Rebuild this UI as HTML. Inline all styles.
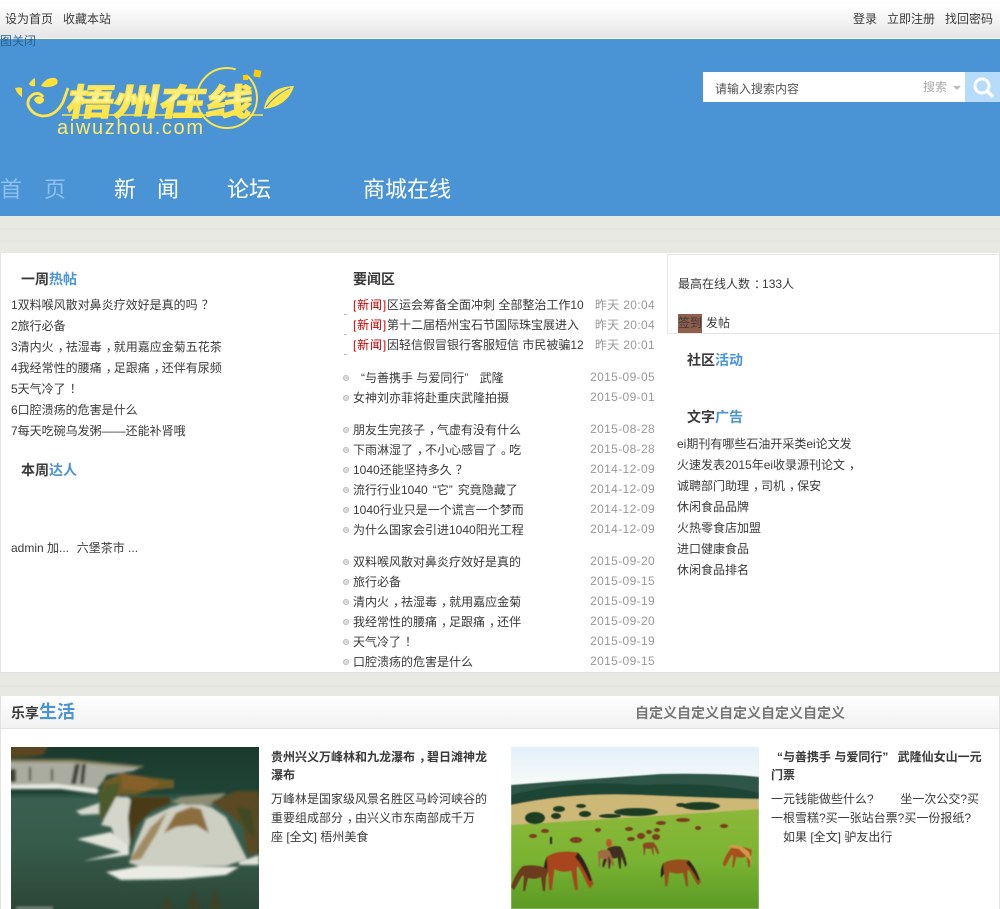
<!DOCTYPE html>
<html lang="zh">
<head>
<meta charset="utf-8">
<title>梧州在线</title>
<style>
html,body{margin:0;padding:0;}
body{position:relative;width:1000px;height:909px;overflow:hidden;background:#e9e9e4;font-family:"WenQuanYi Zen Hei","Liberation Sans","Noto Sans CJK SC",sans-serif;font-size:12px;color:#3a3a3a;}
.a{position:absolute;}
.t{position:absolute;white-space:nowrap;line-height:20px;height:20px;}
.b{font-weight:bold;font-size:14px;}
.bl{color:#4a94d6;}
.d{color:#999;width:80px;text-align:right;left:575px;letter-spacing:.35px;}
.r{color:#c00;display:inline-block;width:34px;letter-spacing:.85px;}
.n{font-size:22px;line-height:30px;height:30px;color:#fff;}
.dot{position:absolute;left:343px;width:4px;height:4px;border:1px solid #bbb;border-radius:50%;background:#ddd;}
.p{position:relative;left:4px;}
.q1{display:inline-block;width:12px;text-align:right;}
.q2{display:inline-block;width:12px;text-align:left;}
.q3{display:inline-block;width:9px;text-align:right;}
.q4{display:inline-block;width:9px;text-align:left;}
</style>
</head>
<body>
<!-- top bar -->
<div class="a" style="left:0;top:0;width:1000px;height:38px;background:linear-gradient(#fff 0%,#fff 15%,#e5e5e5 100%);"></div>
<div class="a" style="left:0;top:38px;width:1000px;height:1px;background:#fff;"></div>
<div class="a" style="left:0;top:39px;width:1000px;height:177px;background:#4a94d6;"></div>
<div class="t" style="left:5px;top:9px;">设为首页</div>
<div class="t" style="left:63px;top:9px;">收藏本站</div>
<div class="t" style="left:853px;top:9px;">登录</div>
<div class="t" style="left:887px;top:9px;">立即注册</div>
<div class="t" style="left:945px;top:9px;">找回密码</div>
<div class="t" style="left:0;top:31px;color:#2a6496;">图关闭</div>

<!-- logo -->
<svg class="a" style="left:0;top:50px;" width="300" height="100" viewBox="0 0 300 100">
<defs><linearGradient id="g" x1="0" y1="0" x2="0" y2="1"><stop offset="0" stop-color="#ffd92e"/><stop offset=".5" stop-color="#fff6a8"/><stop offset=".56" stop-color="#ffe95c"/><stop offset="1" stop-color="#ffe23c"/></linearGradient></defs>
<path d="M15 38q5-1 7 0l0 9q-5-3-7-9zM29 34q3-5 6-6l0 8q-4 1-6-2zM41 36q5-9 14-8q4 2 2 6q-7 5-16 2z" fill="#ffdf38"/>
<path d="M43 47q-3-5-9-3q-7 4-6 11q4 10 15 11q13 0 20-14q3-8 5-14" fill="none" stroke="#ffe44a" stroke-width="2.8"/>
<path d="M34 50q2-5 8-3q4 3 0 6q-4 3-8-3z" fill="#ffe44a"/>
<text x="66" y="65" font-family="WenQuanYi Zen Hei,Noto Sans CJK SC,sans-serif" font-weight="bold" font-size="36" fill="url(#g)" stroke="#ffe44a" stroke-width="1.3" textLength="185" lengthAdjust="spacingAndGlyphs" transform="skewX(-10) translate(11 0)">梧州在线</text>
<circle cx="227" cy="48" r="30" fill="none" stroke="#ffe44a" stroke-width="2" stroke-dasharray="150 12"/>
<path d="M62 65H263" stroke="#ffe44a" stroke-width="1.5"/>
<rect x="254" y="20" width="7" height="7" fill="#fc0" transform="rotate(10 257 23)"/>
<rect x="243" y="25" width="5" height="5" fill="#fc0"/>
<path d="M264 59q3-22 30-23q-6 20-30 23z" fill="#ffe44a"/>
<path d="M266 57q10-13 24-19" stroke="#4a94d6" stroke-width="1" fill="none"/>
<text x="57" y="84" font-family="Liberation Sans,sans-serif" font-size="20" fill="#ffe96a" textLength="146">aiwuzhou.com</text>
</svg>

<!-- search -->
<div class="a" style="left:703px;top:72px;width:262px;height:30px;background:#fff;"></div>
<div class="t" style="left:715px;top:79px;color:#555;">请输入搜索内容</div>
<div class="t" style="left:923px;top:77px;color:#aaa;">搜索</div>
<div class="a" style="left:953px;top:86px;width:0;height:0;border-left:4px solid transparent;border-right:4px solid transparent;border-top:4px solid #bbb;"></div>
<div class="a" style="left:965px;top:72px;width:35px;height:30px;background:#b5dcfb;"></div>
<svg class="a" style="left:972px;top:76px;" width="24" height="23" viewBox="0 0 24 23"><circle cx="10" cy="10" r="7" fill="none" stroke="#fff" stroke-width="3"/><path d="M15 15l6 6" stroke="#fff" stroke-width="3.5"/></svg>

<!-- nav -->
<div class="t n" style="left:0;top:175px;color:#8cc0ee;">首</div>
<div class="t n" style="left:44px;top:175px;color:#8cc0ee;">页</div>
<div class="t n" style="left:114px;top:175px;">新</div>
<div class="t n" style="left:157px;top:175px;">闻</div>
<div class="t n" style="left:227px;top:175px;">论坛</div>
<div class="t n" style="left:363px;top:175px;">商城在线</div>

<!-- bg stripes -->
<div class="a" style="left:0;top:228px;width:1000px;height:2px;background:#e4e4e2;"></div>
<div class="a" style="left:0;top:240px;width:1000px;height:2px;background:#e4e4e2;"></div>
<div class="a" style="left:0;top:685px;width:1000px;height:2px;background:#e4e4e2;"></div>

<!-- main panel -->
<div class="a" style="left:0;top:253px;width:998px;height:419px;background:#fff;border:1px solid #e2e2e2;border-top:0;"></div>
<div class="a" style="left:667px;top:254px;width:331px;height:78px;background:#fff;border:1px solid #e5e5e5;"></div>

<!-- left -->
<div class="t b" style="left:21px;top:269px;">一周<span class="bl">热帖</span></div>
<div class="t" style="left:11px;top:295px;">1双料喉风散对鼻炎疗效好是真的吗<span class="p">？</span></div>
<div class="t" style="left:11px;top:316px;">2旅行必备</div>
<div class="t" style="left:11px;top:337px;">3清内火<span class="p">，</span>祛湿毒<span class="p">，</span>就用嘉应金菊五花茶</div>
<div class="t" style="left:11px;top:358px;">4我经常性的腰痛<span class="p">，</span>足跟痛<span class="p">，</span>还伴有尿频</div>
<div class="t" style="left:11px;top:379px;">5天气冷了<span class="p">！</span></div>
<div class="t" style="left:11px;top:400px;">6口腔溃疡的危害是什么</div>
<div class="t" style="left:11px;top:421px;">7每天吃碗乌发粥——还能补肾哦</div>
<div class="t b" style="left:21px;top:460px;">本周<span class="bl">达人</span></div>
<div class="t" style="left:11px;top:538px;">admin 加... &nbsp;&#8202;六堡茶市 ...</div>

<!-- middle -->
<div class="t b" style="left:353px;top:269px;">要闻区</div>
<div class="t" style="left:353px;top:295px;"><span class="r">[新闻]</span>区运会筹备全面冲刺 全部整治工作10</div>
<div class="t d" style="top:295px;">昨天 20:04</div>
<div class="t" style="left:353px;top:315px;"><span class="r">[新闻]</span>第十二届梧州宝石节国际珠宝展进入</div>
<div class="t d" style="top:315px;">昨天 20:04</div>
<div class="t" style="left:353px;top:335px;"><span class="r">[新闻]</span>因轻信假冒银行客服短信 市民被骗12</div>
<div class="t d" style="top:335px;">昨天 20:01</div>
<div class="a" style="left:344px;top:314px;width:3px;height:1px;background:#bbb;"></div>
<div class="a" style="left:344px;top:334px;width:3px;height:1px;background:#bbb;"></div>
<div class="a" style="left:344px;top:354px;width:3px;height:1px;background:#bbb;"></div>

<div class="dot" style="top:375px;"></div><div class="t" style="left:353px;top:368px;"><span class="q1">“</span>与善携手 与爱同行<span class="q2">”</span> 武隆</div><div class="t d" style="top:367px;">2015-09-05</div>
<div class="dot" style="top:395px;"></div><div class="t" style="left:353px;top:388px;">女神刘亦菲将赴重庆武隆拍摄</div><div class="t d" style="top:387px;">2015-09-01</div>

<div class="dot" style="top:427px;"></div><div class="t" style="left:353px;top:420px;">朋友生完孩子<span class="p">，</span>气虚有没有什么</div><div class="t d" style="top:419px;">2015-08-28</div>
<div class="dot" style="top:447px;"></div><div class="t" style="left:353px;top:440px;">下雨淋湿了<span class="p">，</span>不小心感冒了<span class="p">。</span>吃</div><div class="t d" style="top:439px;">2015-08-28</div>
<div class="dot" style="top:467px;"></div><div class="t" style="left:353px;top:460px;">1040还能坚持多久<span class="p">？</span></div><div class="t d" style="top:459px;">2014-12-09</div>
<div class="dot" style="top:487px;"></div><div class="t" style="left:353px;top:480px;">流行行业1040<span class="q3">“</span>它<span class="q4">”</span>究竟隐藏了</div><div class="t d" style="top:479px;">2014-12-09</div>
<div class="dot" style="top:507px;"></div><div class="t" style="left:353px;top:500px;">1040行业只是一个谎言一个梦而</div><div class="t d" style="top:499px;">2014-12-09</div>
<div class="dot" style="top:527px;"></div><div class="t" style="left:353px;top:520px;">为什么国家会引进1040阳光工程</div><div class="t d" style="top:519px;">2014-12-09</div>

<div class="dot" style="top:559px;"></div><div class="t" style="left:353px;top:552px;">双料喉风散对鼻炎疗效好是真的</div><div class="t d" style="top:551px;">2015-09-20</div>
<div class="dot" style="top:579px;"></div><div class="t" style="left:353px;top:572px;">旅行必备</div><div class="t d" style="top:571px;">2015-09-15</div>
<div class="dot" style="top:599px;"></div><div class="t" style="left:353px;top:592px;">清内火<span class="p">，</span>祛湿毒<span class="p">，</span>就用嘉应金菊</div><div class="t d" style="top:591px;">2015-09-19</div>
<div class="dot" style="top:619px;"></div><div class="t" style="left:353px;top:612px;">我经常性的腰痛<span class="p">，</span>足跟痛<span class="p">，</span>还伴</div><div class="t d" style="top:611px;">2015-09-20</div>
<div class="dot" style="top:639px;"></div><div class="t" style="left:353px;top:632px;">天气冷了<span class="p">！</span></div><div class="t d" style="top:631px;">2015-09-19</div>
<div class="dot" style="top:659px;"></div><div class="t" style="left:353px;top:652px;">口腔溃疡的危害是什么</div><div class="t d" style="top:651px;">2015-09-15</div>

<!-- right -->
<div class="t" style="left:678px;top:274px;">最高在线人数<span class="p">：</span>133人</div>
<div class="a" style="left:678px;top:314px;width:24px;height:19px;background:#8f5f4c;"></div>
<div class="t" style="left:678px;top:313px;">签到</div>
<div class="t" style="left:706px;top:313px;">发帖</div>
<div class="t b" style="left:687px;top:350px;">社区<span class="bl">活动</span></div>
<div class="t b" style="left:687px;top:407px;">文字<span class="bl">广告</span></div>
<div class="t" style="left:677px;top:434px;">ei期刊有哪些石油开采类ei论文发</div>
<div class="t" style="left:677px;top:455px;">火速发表2015年ei收录源刊论文<span class="p">，</span></div>
<div class="t" style="left:677px;top:476px;">诚聘部门助理<span class="p">，</span>司机<span class="p">，</span>保安</div>
<div class="t" style="left:677px;top:497px;">休闲食品品牌</div>
<div class="t" style="left:677px;top:518px;">火热零食店加盟</div>
<div class="t" style="left:677px;top:539px;">进口健康食品</div>
<div class="t" style="left:677px;top:560px;">休闲食品排名</div>

<!-- life section -->
<div class="a" style="left:0;top:696px;width:998px;height:213px;background:#fff;border-left:1px solid #e2e2e2;border-right:1px solid #e2e2e2;"></div>
<div class="a" style="left:1px;top:697px;width:998px;height:31px;background:linear-gradient(#fff,#f1f1f1);border-bottom:1px solid #e2e2e2;"></div>
<div class="t" style="left:11px;top:703px;font-weight:bold;font-size:14px;">乐享</div>
<div class="t bl" style="left:39px;top:702px;font-weight:bold;font-size:18px;">生活</div>
<div class="t" style="left:635px;top:703px;font-weight:bold;font-size:14px;color:#777;">自定义自定义自定义自定义自定义</div>

<!-- waterfall image -->
<svg class="a" style="left:11px;top:747px;" width="248" height="162" viewBox="0 0 248 162">
<defs>
<linearGradient id="w1" x1="0" y1="0" x2="0" y2="1"><stop offset="0" stop-color="#1b3a2e"/><stop offset=".28" stop-color="#1f4335"/><stop offset=".32" stop-color="#3a5f50"/><stop offset=".6" stop-color="#375b4b"/><stop offset="1" stop-color="#2b4737"/></linearGradient>
<filter id="bl" x="-5%" y="-5%" width="110%" height="110%"><feGaussianBlur stdDeviation="1.4"/></filter>
</defs>
<rect width="248" height="162" fill="url(#w1)"/>
<g filter="url(#bl)">
<path d="M-5 -5H40L32 8Q15 11-5 10Z" fill="#5c4420"/>
<path d="M-5 12H60L133 19L122 24L96 28L88 40L80 44L-5 38Z" fill="#a9ac9f"/>
<path d="M-5 12H60L133 19L130 21L60 15H-5Z" fill="#7f7350"/>
<path d="M64 17h5l-4 20h-5zM71 17h4l-2 20h-4zM-5 22h10v13h-10zM18 20h2v14h-2zM40 22h2v12h-2z" fill="#3f4038"/>
<path d="M-5 38L45 37L88 42L86 47L50 42H-5Z" fill="#e9ebe3"/>
<path d="M65 64L88 56L89 67L70 68Z" fill="#d5d8ce"/>
<path d="M88 48L93 34L110 26L135 30L163 33L163 41L140 43L125 48L110 48L100 56L95 74L88 70Z" fill="#6d5b26"/>
<path d="M88 50L94 38L108 36L106 50L95 74L88 70Z" fill="#4b5a2c"/>
<path d="M110 26L135 30L150 36L135 44L112 42Z" fill="#85602a"/>
<path d="M90 78L105 50L117 50L125 60L118 100L106 95L100 80Z" fill="#d4d6cc"/>
<path d="M120 50L158 50L160 56L140 64L125 80L119 100L117 70Z" fill="#4a3b19"/>
<path d="M66 92L100 85L118 100L118 108L72 114L110 105Z" fill="#e2e4da"/>
<path d="M118 116L125 95L135 72L160 60L178 55L200 60L215 70L236 112L215 119L130 120Z" fill="#cdcfc3"/>
<path d="M153 86L165 66L180 60L190 62L198 86L185 78L165 80Z" fill="#8b6e3e"/>
<path d="M118 114L140 80L156 65L146 86L130 112Z" fill="#a08b62"/>
<path d="M160 55L170 50L215 46L200 58L175 58Z" fill="#8d8d74"/>
<path d="M200 55L225 44L248 44V106L237 108L232 80L220 68Z" fill="#5a4a20"/>
<path d="M225 60L240 62L244 90L236 85Z" fill="#3f4a22"/>
<path d="M95 125L130 119L228 120L215 128L170 132L110 133Z" fill="#eaece4"/>
<path d="M228 115L248 108V118L228 118Z" fill="#dfe1d7"/>
<path d="M150 162L156 148L162 162ZM176 162L182 142L190 162ZM198 162L204 140L210 162Z" fill="#3e4226"/>
<path d="M5 162V160H42V162Z" fill="#9aa096"/>
</g>
</svg>

<div class="t" style="left:271px;top:747px;font-weight:bold;">贵州兴义万峰林和九龙瀑布<span class="p">，</span>碧日滩神龙</div>
<div class="t" style="left:271px;top:765px;font-weight:bold;">瀑布</div>
<div class="t" style="left:271px;top:789px;">万峰林是国家级风景名胜区马岭河峡谷的</div>
<div class="t" style="left:271px;top:808px;">重要组成部分<span class="p">，</span>由兴义市东南部成千万</div>
<div class="t" style="left:271px;top:827px;">座 [全文] 梧州美食</div>

<!-- horses image -->
<svg class="a" style="left:511px;top:747px;" width="248" height="162" viewBox="0 0 248 162">
<defs>
<linearGradient id="sky" x1="0" y1="0" x2="0" y2="1"><stop offset="0" stop-color="#e2f0fb"/><stop offset="1" stop-color="#fbfcf6"/></linearGradient>
<linearGradient id="gr" x1="0" y1="0" x2="0" y2="1"><stop offset="0" stop-color="#8db83a"/><stop offset=".5" stop-color="#7ab432"/><stop offset="1" stop-color="#5c9a26"/></linearGradient>
<filter id="b2" x="-10%" y="-10%" width="120%" height="120%"><feGaussianBlur stdDeviation=".5"/></filter>
<g id="h">
<path d="M2 6Q10 1 26 3Q30 6 35 16L38 24L35 27L31 20Q28 14 26 12L25 14L26 28H24L21 15Q14 17 8 14L6 28H4L3 14Q1 10 2 6Z"/>
</g>
<g id="m"><path d="M26 3Q32 8 37 22L35 22Q30 12 24 6ZM2 6Q-1 12 0 20L3 16Z" fill="#2a241a"/></g>
</defs>
<rect width="248" height="45" fill="url(#sky)"/>
<g filter="url(#b2)">
<path d="M0 38Q80 32 150 27Q210 26 248 30V60H0Z" fill="#2e5547"/>
<path d="M0 48Q60 32 130 38Q200 34 248 46V60H0Z" fill="#1d4434"/>
<path d="M0 58Q60 45 130 48T248 52V75Q120 85 0 82Z" fill="#cdb878"/>
<path d="M0 78Q130 70 248 62V162H0Z" fill="url(#gr)"/>
</g>
<g filter="url(#b2)" fill="#1f3d24">
<ellipse cx="24" cy="71" rx="10" ry="6"/><ellipse cx="48" cy="62" rx="6" ry="3"/><ellipse cx="45" cy="69" rx="5" ry="3"/><ellipse cx="74" cy="67" rx="6" ry="3"/><ellipse cx="99" cy="69" rx="11" ry="2"/><ellipse cx="125" cy="65" rx="22" ry="4"/><ellipse cx="190" cy="59" rx="19" ry="4"/><ellipse cx="70" cy="59" rx="5" ry="2"/><ellipse cx="170" cy="58" rx="5" ry="2"/>
</g>
<g fill="#7a3c1e" filter="url(#b2)">
<ellipse cx="87" cy="83" rx="3" ry="2"/><ellipse cx="118" cy="82" rx="4" ry="2"/><ellipse cx="150" cy="76" rx="5" ry="2"/><ellipse cx="172" cy="73" rx="7" ry="2"/><ellipse cx="187" cy="81" rx="3" ry="2"/><ellipse cx="213" cy="79" rx="4" ry="2"/><ellipse cx="146" cy="83" rx="3" ry="2"/><ellipse cx="34" cy="84" rx="4" ry="2"/><ellipse cx="130" cy="89" rx="4" ry="3"/><ellipse cx="138" cy="85" rx="3" ry="2"/><ellipse cx="65" cy="93" rx="6" ry="3"/><ellipse cx="22" cy="89" rx="4" ry="2"/><ellipse cx="145" cy="90" rx="4" ry="3"/><ellipse cx="120" cy="92" rx="4" ry="2"/><rect x="39" y="90" width="2" height="7" fill="#222"/>
</g>
<g filter="url(#b2)">
<use href="#h" fill="#a8451b" transform="translate(33 101) scale(1.3 1.5)"/>
<use href="#m" transform="translate(33 101) scale(1.3 1.5)"/>
<use href="#h" fill="#6a3a1c" transform="translate(38 116) scale(-1 1)"/>
<use href="#h" fill="#3f2e20" transform="translate(95 97) scale(.55 .85)"/>
<use href="#h" fill="#3f2e20" transform="translate(112 98) scale(-.55 .85)"/>
<use href="#h" fill="#a06a42" transform="translate(86 101) scale(.45 .7)"/>
<ellipse cx="98" cy="96" rx="3" ry="4" fill="#c0562a"/>
<use href="#h" fill="#8b4a22" transform="translate(131 94) scale(.45 .5)"/>
<use href="#h" fill="#96501f" transform="translate(150 110) scale(1.05 1.05)"/>
<use href="#m" transform="translate(150 110) scale(1.05 1.05)"/>
<use href="#h" fill="#a8501e" transform="translate(242 98) scale(-.8 .8)"/>
<path d="M216 100Q226 94 238 105L242 118L238 112L228 102Z" fill="#d09a48"/>
</g>
</svg>

<div class="t" style="left:771px;top:747px;font-weight:bold;"><span class="q1">“</span>与善携手 与爱同行<span class="q2">”</span> 武隆仙女山一元</div>
<div class="t" style="left:771px;top:765px;font-weight:bold;">门票</div>
<div class="t" style="left:771px;top:789px;">一元钱能做些什么? &nbsp; &nbsp; &nbsp; &nbsp;坐一次公交?买</div>
<div class="t" style="left:771px;top:808px;">一根雪糕?买一张站台票?买一份报纸?</div>
<div class="t" style="left:783px;top:827px;">如果 [全文] 驴友出行</div>
</body>
</html>
